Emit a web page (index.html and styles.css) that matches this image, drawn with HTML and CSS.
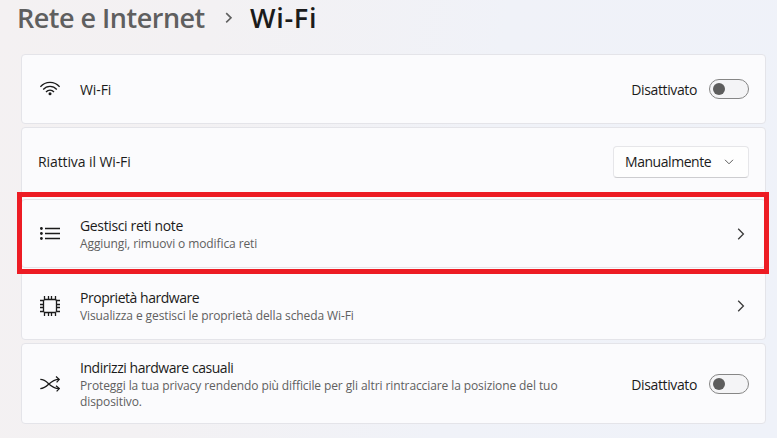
FILE: index.html
```html
<!DOCTYPE html>
<html lang="it">
<head>
  <meta charset="UTF-8">
  <meta name="viewport" content="width=device-width, initial-scale=1.0">
  <title>Wi-Fi</title>
  <link rel="stylesheet" href="styles.css">
</head>
<body>

  <header class="breadcrumb">
    <span class="parent">Rete e Internet</span>
    <svg class="sep" width="8" height="12" viewBox="0 0 8 12"><path d="M1.2 1.2 L6 5.8 L1.2 10.4"/></svg>
    <h1>Wi-Fi</h1>
  </header>

  <main class="settings">
    <section class="card">
      <svg class="icon wifi" width="20" height="20" viewBox="0 0 20 20">
        <path d="M0.4 7.8 C5.4 1.8 14.6 1.8 19.6 7.8"/>
        <path d="M3.2 10.5 C6.9 6.2 13.1 6.2 16.8 10.5"/>
        <path d="M6 13 C8.2 10.4 11.8 10.4 14 13"/>
        <circle cx="10" cy="14.7" r="1.5"/>
      </svg>
      <div class="text">
        <div class="title loose">Wi-Fi</div>
      </div>
      <span class="state">Disattivato</span>
      <button type="button" class="toggle" aria-label="Wi-Fi"></button>
    </section>

    <section class="card">
      <div class="text">
        <div class="title loose">Riattiva il Wi-Fi</div>
      </div>
      <button type="button" class="dropdown">
        <span>Manualmente</span>
        <svg width="10" height="6" viewBox="0 0 10 6"><path d="M1 0.8 L5 4.8 L9 0.8"/></svg>
      </button>
    </section>

    <section class="card highlighted">
      <svg class="icon list" width="20" height="20" viewBox="0 0 20 20">
        <path d="M5 4.5 H20 M5 9.5 H20 M5 14.5 H20"/>
        <circle cx="1.4" cy="4.5" r="1.4"/>
        <circle cx="1.4" cy="9.5" r="1.4"/>
        <circle cx="1.4" cy="14.5" r="1.4"/>
      </svg>
      <div class="text">
        <div class="title">Gestisci reti note</div>
        <div class="description">Aggiungi, rimuovi o modifica reti</div>
      </div>
      <svg class="chevron" width="8" height="12" viewBox="0 0 8 12"><path d="M1.2 0.8 L6.4 6 L1.2 11.2"/></svg>
    </section>

    <section class="card">
      <svg class="icon chip" width="20" height="20" viewBox="0 0 20 20">
        <rect x="3.5" y="3.5" width="13" height="13" rx="1.5"/>
        <path d="M4.5 0 V3 M8.5 0 V3 M11.5 0 V3 M15.5 0 V3 M4.5 17 V20 M8.5 17 V20 M11.5 17 V20 M15.5 17 V20 M0 4.5 H3 M0 8.5 H3 M0 11.5 H3 M0 15.5 H3 M17 4.5 H20 M17 8.5 H20 M17 11.5 H20 M17 15.5 H20"/>
      </svg>
      <div class="text">
        <div class="title tight">Proprietà hardware</div>
        <div class="description">Visualizza e gestisci le proprietà della scheda Wi-Fi</div>
      </div>
      <svg class="chevron" width="8" height="12" viewBox="0 0 8 12"><path d="M1.2 0.8 L6.4 6 L1.2 11.2"/></svg>
    </section>

    <section class="card tall">
      <svg class="icon shuffle" width="20" height="20" viewBox="0 0 20 20">
        <path d="M0.3 5.4 C8.5 5.4 9 14.6 19 14.6 M0.3 14.6 C8.5 14.6 9 5.4 19 5.4"/>
        <path d="M16 2.6 L19.3 5.4 L16.6 8.4 M16 11.8 L19.3 14.6 L16.6 17.4"/>
      </svg>
      <div class="text">
        <div class="title tight">Indirizzi hardware casuali</div>
        <div class="description">Proteggi la tua privacy rendendo più difficile per gli altri rintracciare la posizione del tuo<br>dispositivo.</div>
      </div>
      <span class="state">Disattivato</span>
      <button type="button" class="toggle" aria-label="Indirizzi hardware casuali"></button>
    </section>
  </main>

</body>
</html>
```

FILE: styles.css
```css
body {
  margin: 0;
  height: 438px;
  overflow: hidden;
  font-family: "Open Sans", "Noto Sans", sans-serif;
  color: #1b1b1b;
  background: linear-gradient(100deg, #f4f1f2 0%, #f3f1f3 25%, #f0f2f8 60%, #eff2f9 100%);
}

svg {
  display: block;
  flex: none;
  fill: none;
  stroke: #1b1b1b;
}

.breadcrumb {
  display: flex;
  align-items: center;
  height: 36px;
  margin-bottom: 18px;
  padding-left: 17px;
  font-size: 27px;
  font-weight: 600;
  line-height: 36px;
}

.breadcrumb .parent {
  width: 208px;
  color: #5f5f5f;
  letter-spacing: -0.5px;
}

.breadcrumb .sep {
  stroke: #5f5f5f;
  stroke-width: 1.6;
}

.breadcrumb h1 {
  margin: 0 0 0 17px;
  font-size: 27px;
  font-weight: 600;
  letter-spacing: 0.7px;
}

.settings {
  display: flex;
  flex-direction: column;
  gap: 3px;
  margin: 0 11px 0 21px;
}

.card {
  display: flex;
  align-items: center;
  box-sizing: border-box;
  height: 69px;
  padding: 0 16px;
  border: 1px solid #e4e4e9;
  border-radius: 4px;
  background-color: #fbfbfd;
}

.card:first-child {
  height: 70px;
}

.card.tall {
  height: 81px;
}

.highlighted {
  position: relative;
  box-shadow: 0 0 0 2px #fbfbfd;
}

/* red frame drawn over the gaps around the card */
.highlighted::after {
  content: "";
  position: absolute;
  top: -8px;
  right: -4px;
  bottom: -7px;
  left: -5px;
  border: 5px solid #ed1c24;
}

.icon {
  margin: 0 20px 0 2px;
  stroke-width: 1.3;
}

.icon circle {
  fill: #1b1b1b;
  stroke: none;
}

.text {
  flex: 1;
}

.title {
  font-size: 14px;
  line-height: 19px;
  letter-spacing: -0.36px;
}

.title.loose {
  letter-spacing: -0.1px;
}

.title.tight {
  letter-spacing: -0.46px;
}

.description {
  margin: 1px 0 -1px;
  font-size: 12px;
  line-height: 16px;
  letter-spacing: -0.1px;
  color: #606060;
  white-space: nowrap;
}

.state {
  margin-top: 1px;
  font-size: 14px;
  letter-spacing: -0.38px;
}

.toggle {
  width: 40px;
  height: 20px;
  margin-left: 12px;
  padding: 0 3px;
  border: 1px solid #868686;
  border-radius: 10px;
  background-color: #f4f4f6;
}

.toggle::before {
  content: "";
  display: block;
  width: 12px;
  height: 12px;
  border-radius: 50%;
  background-color: #5d5d5d;
}

.dropdown {
  display: flex;
  align-items: center;
  justify-content: space-between;
  box-sizing: border-box;
  width: 136px;
  height: 32px;
  padding: 0 14px 0 11px;
  border: 1px solid #e6e6e9;
  border-bottom-color: #cdcdd0;
  border-radius: 4px;
  background-color: #fefefe;
  font-family: inherit;
  font-size: 14px;
  letter-spacing: -0.45px;
  color: #1b1b1b;
}

.dropdown svg {
  stroke: #5d5d5d;
}

.chevron {
  margin-right: 4px;
  stroke: #3a3a3a;
  stroke-width: 1.3;
}
```
